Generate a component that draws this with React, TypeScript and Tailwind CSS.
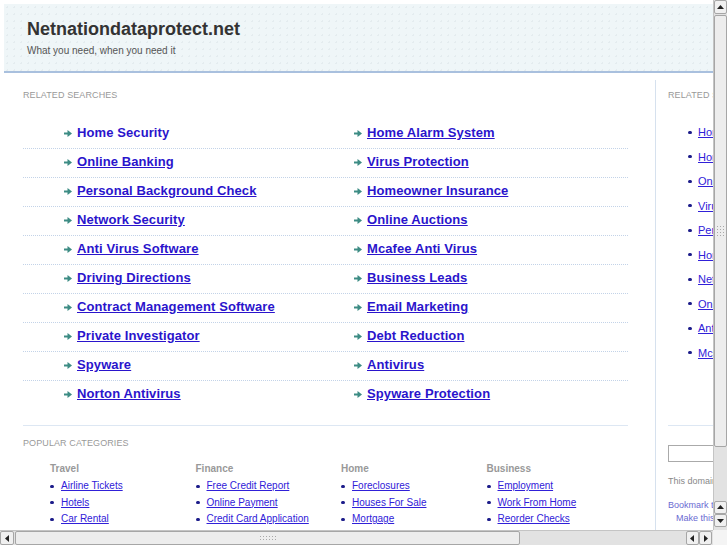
import React from "react";

const LEFT = [
  "Home Security",
  "Online Banking",
  "Personal Background Check",
  "Network Security",
  "Anti Virus Software",
  "Driving Directions",
  "Contract Management Software",
  "Private Investigator",
  "Spyware",
  "Norton Antivirus",
];

const RIGHT = [
  "Home Alarm System",
  "Virus Protection",
  "Homeowner Insurance",
  "Online Auctions",
  "Mcafee Anti Virus",
  "Business Leads",
  "Email Marketing",
  "Debt Reduction",
  "Antivirus",
  "Spyware Protection",
];

const SIDE = [
  "Home Security",
  "Home Alarm System",
  "Online Banking",
  "Virus Protection",
  "Personal Background Check",
  "Homeowner Insurance",
  "Network Security",
  "Online Auctions",
  "Anti Virus Software",
  "Mcafee Anti Virus",
];

const CATEGORIES = [
  { title: "Travel", links: ["Airline Tickets", "Hotels", "Car Rental"] },
  { title: "Finance", links: ["Free Credit Report", "Online Payment", "Credit Card Application"] },
  { title: "Home", links: ["Foreclosures", "Houses For Sale", "Mortgage"] },
  { title: "Business", links: ["Employment", "Work From Home", "Reorder Checks"] },
];

function Arrow() {
  return (
    <svg width="8" height="7" viewBox="0 0 8 7" className="shrink-0">
      <rect x="0" y="2.5" width="4" height="2" fill="#3d8c84" />
      <polygon points="3.5,0 8,3.5 3.5,7" fill="#3d8c84" />
    </svg>
  );
}

function Tri({ dir }: { dir: "up" | "down" | "left" | "right" }) {
  const pts = {
    up: "1,6 4.5,2 8,6",
    down: "1,3 4.5,7 8,3",
    left: "6,1 2,4.5 6,8",
    right: "3,1 7,4.5 3,8",
  }[dir];
  return (
    <svg width="9" height="9" viewBox="0 0 9 9">
      <polygon points={pts} fill="#222" />
    </svg>
  );
}

function Grip({ vertical }: { vertical?: boolean }) {
  const dots = Array.from({ length: 12 });
  return (
    <div className={vertical ? "grid grid-cols-3 gap-[2px]" : "grid grid-cols-6 gap-[2px]"}>
      {dots.map((_, i) => (
        <span key={i} className="h-px w-px bg-[#a8a8a8]" />
      ))}
    </div>
  );
}

function LinkRow({ left, right, first, last }: { left: string; right: string; first: boolean; last: boolean }) {
  return (
    <div
      className={
        "flex pl-[41px] pt-[5px] pb-[7px] " +
        (last ? "" : "border-b border-dotted border-[#c3d3e8]")
      }
    >
      {[left, right].map((t, i) => (
        <div
          key={t}
          className={"flex items-center gap-[5px] " + (i === 0 ? "w-[290px] shrink-0" : "flex-1")}
        >
          <Arrow />
          <a
            href="#"
            className={
              "text-[13px] font-bold leading-4 tracking-[0.1px] text-[#2a14cc] " +
              (first && i === 0 ? "no-underline" : "underline")
            }
          >
            {t}
          </a>
        </div>
      ))}
    </div>
  );
}

export default function App() {
  return (
    <div className="flex h-[545px] w-[727px] flex-col overflow-hidden bg-white font-['Liberation_Sans',Arial,sans-serif]">
      <div className="flex min-h-0 flex-1">
        <div className="min-w-0 flex-1 overflow-hidden">
          <div className="w-[960px]">
            {/* header */}
            <div className="ml-1 mr-1 mt-1 h-[69px] border-b-2 border-[#a9c0de] bg-[#eff6f8] bg-[radial-gradient(circle,#e4ecef_1px,transparent_1px)] bg-[length:7px_7px] pl-[23px] pt-[15px]">
              <h1 className="text-[18px] font-bold leading-[21px] text-[#333]">
                Netnationdataprotect.net
              </h1>
              <p className="mt-[5px] text-[10px] leading-3 text-[#555]">
                What you need, when you need it
              </p>
            </div>

            <div className="flex">
              {/* main column */}
              <div className="ml-[23px] w-[605px] shrink-0 pt-[17px]">
                <div className="text-[9px] leading-[11px] tracking-[0.1px] text-[#999]">
                  RELATED SEARCHES
                </div>
                <div className="mt-[19px]">
                  {LEFT.map((l, i) => (
                    <LinkRow key={l} left={l} right={RIGHT[i]} first={i === 0} last={i === LEFT.length - 1} />
                  ))}
                </div>
                <div className="mt-[16px] border-t border-[#dde7f3] pt-[12px]">
                  <div className="text-[9px] leading-[11px] tracking-[0.1px] text-[#999]">
                    POPULAR CATEGORIES
                  </div>
                  <div className="mt-[14px] flex pl-[27px]">
                    {CATEGORIES.map((c) => (
                      <div key={c.title} className="w-[145.5px] shrink-0">
                        <div className="text-[10px] font-bold leading-3 text-[#999]">{c.title}</div>
                        <ul className="mt-[3px]">
                          {c.links.map((l) => (
                            <li key={l} className="flex items-center gap-[7px] leading-[16.5px]">
                              <span className="h-[3px] w-[4px] rounded-full bg-[#1c1c8a]" />
                              <a href="#" className="text-[10px] text-[#3020d8] underline">
                                {l}
                              </a>
                            </li>
                          ))}
                        </ul>
                      </div>
                    ))}
                  </div>
                </div>
              </div>

              {/* sidebar */}
              <div className="ml-[27px] mt-[7px] h-[460px] w-[260px] shrink-0 border-l border-[#d6e1ee] pl-[12px] pt-[10px]">
                <div className="text-[9px] leading-[11px] tracking-[0.1px] text-[#999]">
                  RELATED SEARCHES
                </div>
                <ul className="mt-[19px] pl-[20px]">
                  {SIDE.map((s) => (
                    <li key={s} className="flex items-center gap-[6px] leading-[24.5px]">
                      <span className="h-[3px] w-[4px] rounded-full bg-[#1c1c8a]" />
                      <a href="#" className="whitespace-nowrap text-[11px] text-[#3020d8] underline">
                        {s}
                      </a>
                    </li>
                  ))}
                </ul>
                <div className="mt-[60px] border-t border-[#dde7f3] pt-[19px]">
                  <div className="h-[17px] w-[200px] border border-[#aaa] bg-white" />
                  <p className="mt-[14px] text-[9px] leading-[11px] text-[#888]">
                    This domain may be for sale
                  </p>
                  <p className="mt-[12px] text-[9px] leading-[13px] text-[#6a6ad2]">
                    Bookmark this page
                  </p>
                  <p className="pl-[8px] text-[9px] leading-[13px] text-[#6a6ad2]">
                    Make this your homepage
                  </p>
                </div>
              </div>
            </div>
          </div>
        </div>

        {/* vertical scrollbar */}
        <div className="flex w-[14px] shrink-0 flex-col border-l border-[#c4c4c4] bg-[#e2e2e2]">
          <div className="flex h-[14px] items-center justify-center rounded-[2px] border border-[#a6a6a6] bg-[#f0f0f0]">
            <Tri dir="up" />
          </div>
          <div className="mt-px flex h-[432px] items-center justify-center rounded-[2px] border border-[#a6a6a6] bg-[#ededed]">
            <Grip vertical />
          </div>
          <div className="flex-1" />
          <div className="flex h-[13px] items-center justify-center rounded-[2px] border border-[#a6a6a6] bg-[#f0f0f0]">
            <Tri dir="up" />
          </div>
          <div className="mb-[3px] flex h-[13px] items-center justify-center rounded-[2px] border border-[#a6a6a6] bg-[#f0f0f0]">
            <Tri dir="down" />
          </div>
        </div>
      </div>

      {/* horizontal scrollbar */}
      <div className="flex h-[15px] shrink-0">
        <div className="flex flex-1 border-t border-[#c4c4c4] bg-[#e2e2e2]">
          <div className="flex w-[14px] items-center justify-center rounded-[2px] border border-[#a6a6a6] bg-[#f0f0f0]">
            <Tri dir="left" />
          </div>
          <div className="ml-px flex w-[505px] items-center justify-center rounded-[2px] border border-[#a6a6a6] bg-[#ededed]">
            <Grip />
          </div>
          <div className="flex-1" />
          <div className="flex w-[13px] items-center justify-center rounded-[2px] border border-[#a6a6a6] bg-[#f0f0f0]">
            <Tri dir="left" />
          </div>
          <div className="mr-px flex w-[13px] items-center justify-center rounded-[2px] border border-[#a6a6a6] bg-[#f0f0f0]">
            <Tri dir="right" />
          </div>
        </div>
        <div className="w-[14px] bg-[#f4f4f4]" />
      </div>
    </div>
  );
}
